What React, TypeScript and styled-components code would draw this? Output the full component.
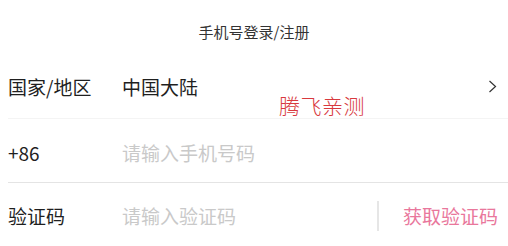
import React from "react";
import styled, { createGlobalStyle } from "styled-components";

const Global = createGlobalStyle`
  html, body { margin: 0; padding: 0; background: #fff; }
  body { font-family: "Noto Sans CJK SC", "Noto Sans", sans-serif; }
  * { box-sizing: border-box; }
`;

const Page = styled.div`
  position: relative;
  width: 508px;
  height: 246px;
  overflow: hidden;
  background: #fff;
`;

const Header = styled.div`
  height: 54px;
  display: flex;
  justify-content: center;
  align-items: center;
  padding-top: 9px;
  font-size: 15px;
  color: #333;
`;

const Row = styled.div<{ $line?: string; $height?: number; $top?: number }>`
  margin-left: 8px;
  height: ${(p) => p.$height ?? 64}px;
  padding-top: ${(p) => p.$top ?? 0}px;
  display: flex;
  align-items: center;
  border-bottom: 1px solid ${(p) => p.$line ?? "transparent"};
  font-size: 19px;
  color: #1f1f1f;
`;

const Label = styled.div`
  width: 114px;
  flex-shrink: 0;
`;

const Value = styled.div<{ $placeholder?: boolean }>`
  flex: 1;
  color: ${(p) => (p.$placeholder ? "#c9c9c9" : "#1f1f1f")};
`;

const Chevron = styled.svg`
  width: 9px;
  height: 13px;
  margin-right: 11px;
`;

const Divider = styled.div`
  width: 2px;
  height: 30px;
  background: #e6e6e6;
  margin-right: 24px;
`;

const CodeButton = styled.div`
  color: #e9779c;
  margin-right: 10px;
`;

const Watermark = styled.div`
  position: absolute;
  left: 279px;
  top: 90px;
  font-size: 21px;
  font-weight: 300;
  color: #d8393e;
  letter-spacing: 0.5px;
`;

export default function App() {
  return (
    <Page>
      <Global />
      <Header>手机号登录/注册</Header>
      <Row $line="#f4f4f4" $height={65} $top={1}>
        <Label>国家/地区</Label>
        <Value>中国大陆</Value>
        <Chevron viewBox="0 0 9 13">
          <path d="M1.5 1 L7.5 6.5 L1.5 12" fill="none" stroke="#333" strokeWidth="1.2" />
        </Chevron>
      </Row>
      <Row $line="#e4e4e4" $top={4}>
        <Label>+86</Label>
        <Value $placeholder>请输入手机号码</Value>
      </Row>
      <Row $top={2}>
        <Label>验证码</Label>
        <Value $placeholder>请输入验证码</Value>
        <Divider />
        <CodeButton>获取验证码</CodeButton>
      </Row>
      <Watermark>腾飞亲测</Watermark>
    </Page>
  );
}
